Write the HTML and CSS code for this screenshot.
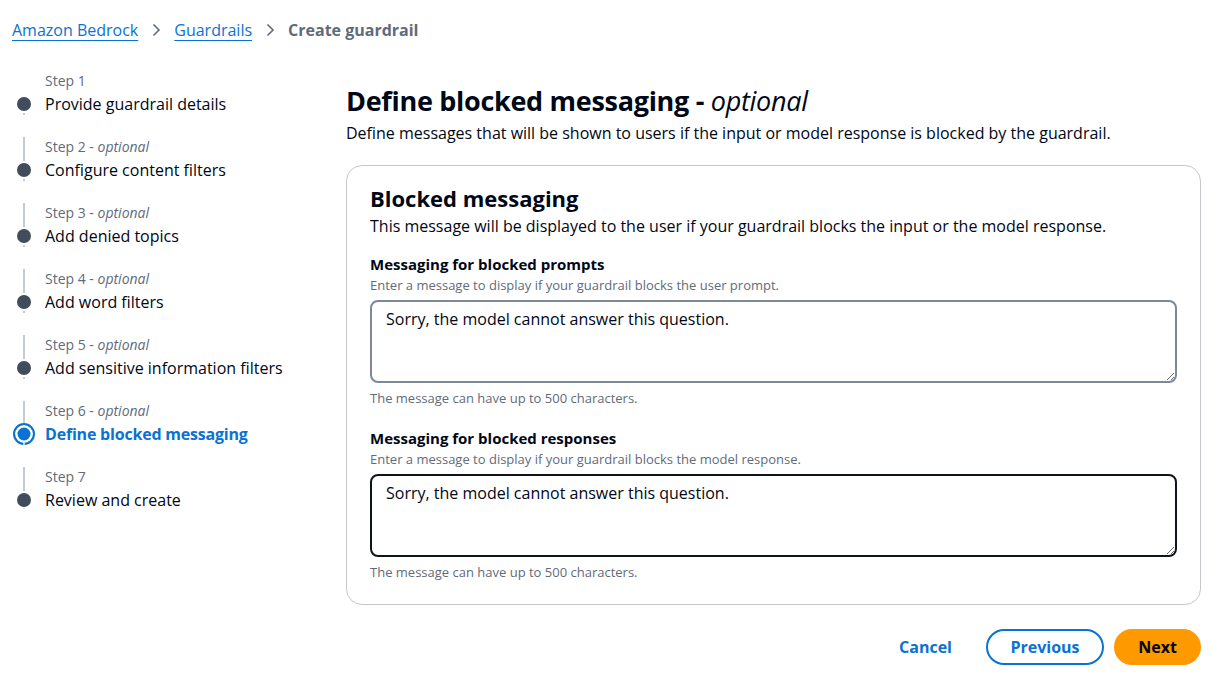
FILE: index.html
```html
<!DOCTYPE html>
<html lang="en">
<head>
<meta charset="utf-8">
<title>Create guardrail</title>
<link rel="stylesheet" href="styles.css">
</head>
<body>
<div class="page">
  <nav class="breadcrumbs">
    <a href="#" class="crumb-link">Amazon Bedrock</a>
    <svg class="chev" width="16" height="16" viewBox="0 0 16 16"><path d="M5.5 2.5 11 8l-5.5 5.5" fill="none" stroke="#5f6b7a" stroke-width="1.6"/></svg>
    <a href="#" class="crumb-link">Guardrails</a>
    <svg class="chev" width="16" height="16" viewBox="0 0 16 16"><path d="M5.5 2.5 11 8l-5.5 5.5" fill="none" stroke="#5f6b7a" stroke-width="1.6"/></svg>
    <span class="crumb-current">Create guardrail</span>
  </nav>

  <div class="layout">
    <ol class="steps">
      <li class="step first">
        <div class="rail"><span class="seg top"></span><span class="dot"></span><span class="seg bottom"></span></div>
        <div class="step-text"><div class="step-label">Step 1</div><div class="step-title">Provide guardrail details</div></div>
      </li>
      <li class="step">
        <div class="rail"><span class="seg top"></span><span class="dot"></span><span class="seg bottom"></span></div>
        <div class="step-text"><div class="step-label">Step 2 - <i>optional</i></div><div class="step-title">Configure content filters</div></div>
      </li>
      <li class="step">
        <div class="rail"><span class="seg top"></span><span class="dot"></span><span class="seg bottom"></span></div>
        <div class="step-text"><div class="step-label">Step 3 - <i>optional</i></div><div class="step-title">Add denied topics</div></div>
      </li>
      <li class="step">
        <div class="rail"><span class="seg top"></span><span class="dot"></span><span class="seg bottom"></span></div>
        <div class="step-text"><div class="step-label">Step 4 - <i>optional</i></div><div class="step-title">Add word filters</div></div>
      </li>
      <li class="step">
        <div class="rail"><span class="seg top"></span><span class="dot"></span><span class="seg bottom"></span></div>
        <div class="step-text"><div class="step-label">Step 5 - <i>optional</i></div><div class="step-title">Add sensitive information filters</div></div>
      </li>
      <li class="step active">
        <div class="rail"><span class="seg top"></span><span class="dot"></span><span class="seg bottom"></span></div>
        <div class="step-text"><div class="step-label">Step 6 - <i>optional</i></div><div class="step-title">Define blocked messaging</div></div>
      </li>
      <li class="step last">
        <div class="rail"><span class="seg top"></span><span class="dot"></span><span class="seg bottom"></span></div>
        <div class="step-text"><div class="step-label">Step 7</div><div class="step-title">Review and create</div></div>
      </li>
    </ol>

    <main class="main">
      <h1 class="page-title">Define blocked messaging - <i class="opt">optional</i></h1>
      <p class="page-desc">Define messages that will be shown to users if the input or model response is blocked by the guardrail.</p>

      <section class="container">
        <h2 class="container-title">Blocked messaging</h2>
        <p class="container-desc">This message will be displayed to the user if your guardrail blocks the input or the model response.</p>

        <div class="field">
          <label class="field-label">Messaging for blocked prompts</label>
          <div class="field-desc">Enter a message to display if your guardrail blocks the user prompt.</div>
          <textarea class="textarea">Sorry, the model cannot answer this question.</textarea>
          <div class="field-constraint">The message can have up to 500 characters.</div>
        </div>

        <div class="field">
          <label class="field-label">Messaging for blocked responses</label>
          <div class="field-desc">Enter a message to display if your guardrail blocks the model response.</div>
          <textarea class="textarea focused">Sorry, the model cannot answer this question.</textarea>
          <div class="field-constraint">The message can have up to 500 characters.</div>
        </div>
      </section>

      <div class="actions">
        <button class="btn btn-link">Cancel</button>
        <button class="btn btn-normal">Previous</button>
        <button class="btn btn-primary">Next</button>
      </div>
    </main>
  </div>
</div>
</body>
</html>
```
FILE: styles.css
```css
* { box-sizing: border-box; }
html, body { margin: 0; padding: 0; background: #ffffff; }
body {
  font-family: "Open Sans", "Noto Sans", Arial, sans-serif;
  color: #000716;
  font-size: 16px;
  line-height: 22px;
}
.page { padding: 19px 10px 0 12px; }

.breadcrumbs {
  display: flex;
  align-items: center;
  gap: 10px;
  height: 22px;
}
.crumb-link {
  color: #0972d3;
  text-decoration: underline;
  text-underline-offset: 4px;
  text-decoration-thickness: 1px;
}
.chev { display: block; }
.crumb-current { color: #5f6b7a; font-weight: 700; }

.layout {
  display: flex;
  margin-top: 30px;
}

.steps {
  list-style: none;
  margin: 0;
  padding: 0 0 0 5px;
  width: 334px;
  flex: none;
}
.step {
  display: flex;
  gap: 14px;
  padding-bottom: 22px;
}
.step.last { padding-bottom: 0; }
.rail {
  width: 14px;
  flex: none;
  display: flex;
  flex-direction: column;
  align-items: center;
}
.seg {
  width: 2px;
  background: #c6ccd4;
}
.seg.top { height: 24px; margin-bottom: 2px; }
.seg.bottom { flex: 1; margin-top: 2px; }
.step.first .seg.top, .step.last .seg.bottom { background: transparent; }
.dot {
  width: 14px;
  height: 14px;
  border-radius: 50%;
  background: #414d5c;
  flex: none;
}
.step.active .dot {
  width: 22px;
  height: 22px;
  margin: -4px 0;
  background: #fff;
  border: 2.5px solid #0972d3;
  box-shadow: inset 0 0 0 2.5px #fff, inset 0 0 0 10px #0972d3;
}
.step-label {
  font-size: 14px;
  line-height: 20px;
  color: #5f6b7a;
  margin-bottom: 2px;
}
.step-title { color: #000716; }
.step.active .step-title { color: #0972d3; font-weight: 700; letter-spacing: -0.2px; }

.main {
  flex: 1;
  min-width: 0;
}
.page-title {
  margin: 12px 0 0;
  font-size: 27px;
  line-height: 36px;
  font-weight: 700;
  letter-spacing: -0.3px;
}
.opt { font-weight: 400; }
.page-desc {
  margin: 3px 0 0;
  color: #000716;
}

.container {
  margin-top: 21px;
  border: 1px solid #c6c6cd;
  border-radius: 16px;
  padding: 20px 23px 23px;
}
.container-title {
  margin: 0;
  font-size: 22px;
  line-height: 24px;
  font-weight: 700;
}
.container-desc {
  margin: 5px 0 0;
  color: #000716;
}
.field { margin-top: 17px; }
.field + .field { margin-top: 21px; }
.field-label {
  display: block;
  font-size: 15px;
  line-height: 20px;
  font-weight: 700;
}
.field-desc, .field-constraint {
  font-size: 13px;
  line-height: 18px;
  color: #5f6b7a;
}
.field-desc { margin-top: 2px; }
.textarea {
  display: block;
  width: 100%;
  height: 83px;
  margin-top: 6px;
  padding: 6px 14px;
  border: 2px solid #7d8998;
  border-radius: 8px;
  font-family: inherit;
  font-size: 16px;
  line-height: 22px;
  color: #000716;
  resize: vertical;
  background: #fff;
  outline: none;
}
.textarea.focused { border-color: #0f141a; }
.field-constraint { margin-top: 6px; }

.actions {
  display: flex;
  justify-content: flex-end;
  align-items: center;
  gap: 10px;
  margin-top: 24px;
}
.btn {
  font-family: inherit;
  font-size: 16px;
  font-weight: 700;
  line-height: 22px;
  border-radius: 20px;
  height: 36px;
  padding: 5px 22px;
  cursor: pointer;
}
.btn-link {
  background: none;
  border: 2px solid transparent;
  color: #0972d3;
}
.btn-normal {
  background: #fff;
  border: 2px solid #0972d3;
  color: #0972d3;
  width: 118px;
}
.btn-primary {
  background: #ff9900;
  border: 2px solid #ff9900;
  color: #000716;
  width: 87px;
}
```
